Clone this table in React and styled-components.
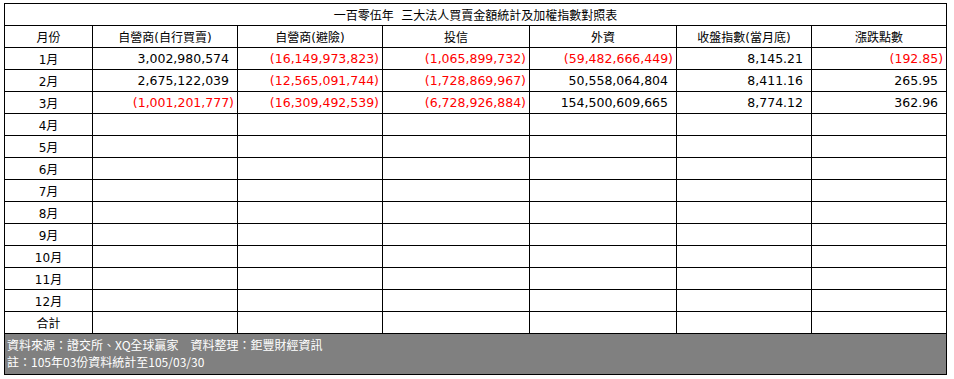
import styled, { createGlobalStyle } from "styled-components"

const GlobalStyle = createGlobalStyle`
    body {
        margin: 0;
        background: #FFFFFF;
        font-family: "DejaVu Sans", "Noto Sans CJK TC", sans-serif;
    }
`

const columns = [88, 145, 145, 147, 147, 135, 135]
const headers = ['月份', '自營商(自行買賣)', '自營商(避險)', '投信', '外資', '收盤指數(當月底)', '漲跌點數']

const data = {
    '1月': ['3,002,980,574', '(16,149,973,823)', '(1,065,899,732)', '(59,482,666,449)', '8,145.21', '(192.85)'],
    '2月': ['2,675,122,039', '(12,565,091,744)', '(1,728,869,967)', '50,558,064,804', '8,411.16', '265.95'],
    '3月': ['(1,001,201,777)', '(16,309,492,539)', '(6,728,926,884)', '154,500,609,665', '8,774.12', '362.96'],
}

const months = ['1月', '2月', '3月', '4月', '5月', '6月', '7月', '8月', '9月', '10月', '11月', '12月', '合計']

export default function App() {
    return (
        <Page>
            <GlobalStyle />
            <Tabela>
                <colgroup>
                    {columns.map((w, i) => <col key={i} style={{ width: w }} />)}
                </colgroup>
                <tbody>
                    <Linha>
                        <Titulo colSpan={7}>一百零伍年&nbsp;&nbsp;三大法人買賣金額統計及加權指數對照表</Titulo>
                    </Linha>
                    <Linha>
                        {headers.map(h => <Celula key={h} $center>{h}</Celula>)}
                    </Linha>
                    {months.map(m => (
                        <Linha key={m}>
                            <Celula $center>{m}</Celula>
                            {(data[m] || ['', '', '', '', '', '']).map((v, i) => {
                                const neg = v.startsWith('(')
                                return (
                                    <Celula key={i}>
                                        {v && <Numero $neg={neg}>{v}</Numero>}
                                    </Celula>
                                )
                            })}
                        </Linha>
                    ))}
                    <tr>
                        <Rodape colSpan={7}>
                            <Nota>
                                <div>資料來源：證交所、XQ全球贏家　資料整理：鉅豐財經資訊</div>
                                <div>註：105年03份資料統計至105/03/30</div>
                            </Nota>
                        </Rodape>
                    </tr>
                </tbody>
            </Tabela>
        </Page>
    )
}

const Page = styled.div`
    padding: 3px 0 0 4px;
`

const Tabela = styled.table`
    width: 943px;
    table-layout: fixed;
    border-collapse: collapse;
    border: 1px solid #000000;
    font-size: 12px;
    color: #000000;
`

const Linha = styled.tr`
    height: 22px;
`

const Titulo = styled.td`
    border: 1px solid #000000;
    padding: 0;
    text-align: center;
    vertical-align: middle;
    white-space: nowrap;
`

const Celula = styled.td`
    border: 1px solid #000000;
    padding: 0 3px 0 0;
    text-align: ${p => (p.$center ? 'center' : 'right')};
    vertical-align: middle;
    white-space: nowrap;
    overflow: hidden;
    ${p => p.$center && 'padding: 0;'}
`

const Numero = styled.span`
    font-size: 12.5px;
    color: ${p => (p.$neg ? '#FF0000' : '#000000')};
    padding-right: ${p => (p.$neg ? '0' : '5px')};
`

const Rodape = styled.td`
    border: 1px solid #000000;
    background: #808080;
    padding: 0;
    vertical-align: top;
`

const Nota = styled.div`
    height: 40px;
    box-sizing: border-box;
    padding: 2px 0 0 2px;
    overflow: hidden;
    color: #FFFFFF;
    font-family: "Noto Sans CJK TC", sans-serif;
    font-size: 12px;
    line-height: 17px;
`
